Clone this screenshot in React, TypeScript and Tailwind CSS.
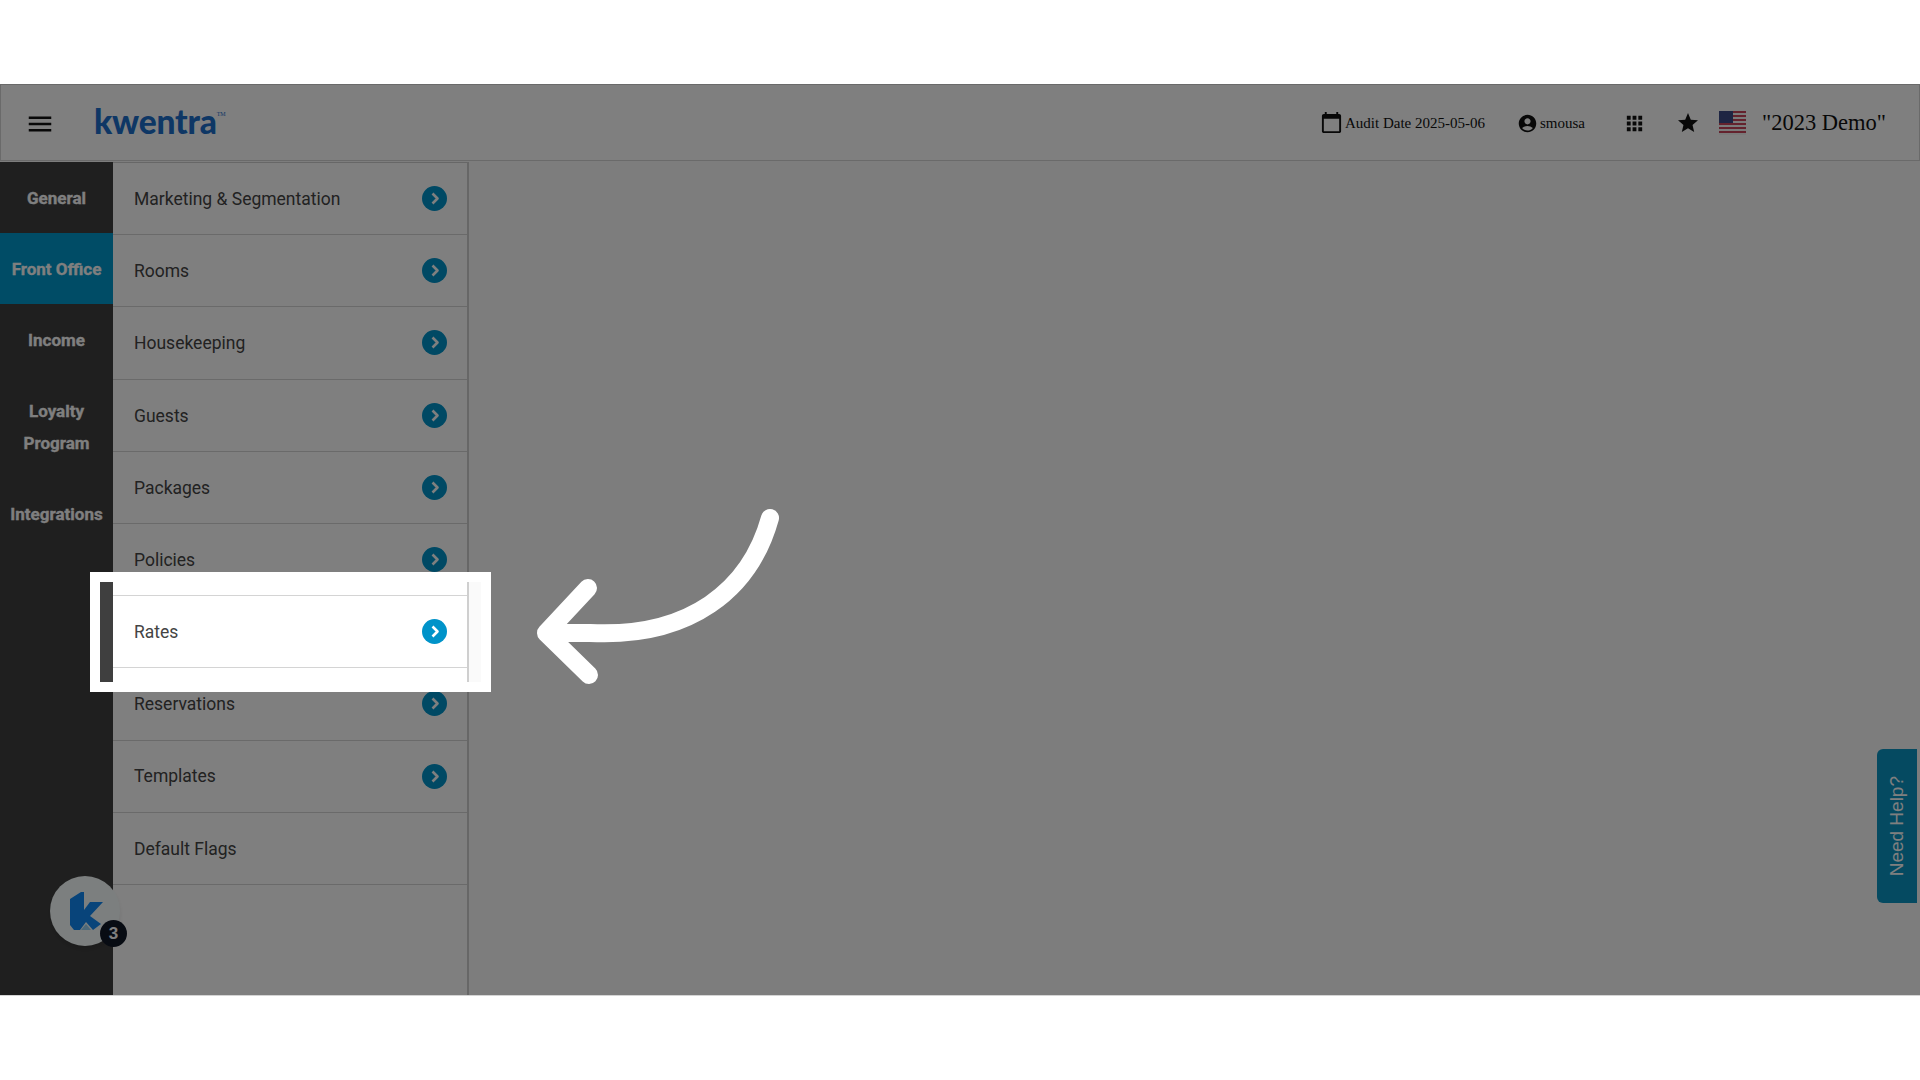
import { MdAccountCircle, MdApps, MdCalendarToday, MdMenu, MdStar } from "react-icons/md"

const sections = [
	{ label: "General" },
	{ label: "Front Office", active: true },
	{ label: "Income" },
	{ label: "Loyalty Program", tall: true },
	{ label: "Integrations" },
]

const menuItems = [
	"Marketing & Segmentation",
	"Rooms",
	"Housekeeping",
	"Guests",
	"Packages",
	"Policies",
	"Rates",
	"Reservations",
	"Templates",
	"Default Flags",
]

const UsFlag = () => (
	<svg width="27" height="24" viewBox="0 0 27 24" className="shrink-0">
		<rect width="27" height="24" fill="#f5f5f5" />
		{[0, 4, 8, 12, 16, 20].map((y) => (
			<rect key={y} y={y} width="27" height="2" fill="#c8455a" />
		))}
		<rect width="14" height="12" fill="#3d4a86" />
	</svg>
)

const ArrowCircle = () => (
	<span className="flex h-[25px] w-[25px] shrink-0 items-center justify-center rounded-full bg-[#0093c9]">
		<svg width="13" height="13" viewBox="0 0 13 13" fill="none">
			<path d="M4.5 1.5 L9.5 6.5 L4.5 11.5" stroke="#fff" strokeWidth="2.6" strokeLinejoin="round" />
		</svg>
	</span>
)

const App = () => {
	return (
		<div className="flex min-h-[1080px] flex-col bg-white font-['Roboto',sans-serif]">
			<div className="h-[84px]" />
			<main className="relative flex h-[912px] flex-col overflow-hidden border-b border-[#d4d4d4] bg-[#fafafa]">
				<header className="flex h-[77px] shrink-0 items-center border border-[#d4d4d4] bg-white font-['Liberation_Serif',serif] text-[#111]">
					<MdMenu className="ml-[24px] mt-[2px] text-[30px]" />
					<span className="relative ml-[39px] -mt-[2px] font-['Lato',sans-serif] text-[33.5px] font-black leading-none tracking-[-0.2px] text-[#1c6ecb]">
						kwentra
					</span>
					<span className="mb-[16px] text-[6px] text-[#1c6ecb]">TM</span>
					<div className="ml-auto flex items-center">
						<MdCalendarToday className="text-[23px]" />
						<span className="ml-[2px] mt-[1px] text-[15px]">Audit Date 2025-05-06</span>
						<MdAccountCircle className="ml-[32px] mt-[1px] text-[21px]" />
						<span className="ml-[2px] mt-[1px] text-[15px]">smousa</span>
						<MdApps className="ml-[38px] mt-[1px] text-[23px]" />
						<MdStar className="ml-[30px] mt-[1px] text-[24px]" />
						<span className="ml-[19px] mt-[1px]"><UsFlag /></span>
						<span className="ml-[16px] mr-[33px] mt-[1px] text-[22.5px]">"2023 Demo"</span>
					</div>
				</header>

				<div className="mt-px flex min-h-0 flex-1">
					<nav className="w-[113px] shrink-0 bg-[#3f3f3f] text-center text-[17px] font-bold leading-[32px] text-white [-webkit-text-stroke:0.3px_#fff]">
						{sections.map((section) => (
							<div
								key={section.label}
								className={`flex items-center justify-center px-1 ${section.tall ? "h-[103px]" : "h-[71px]"} ${section.active ? "bg-[#0099cc]" : ""}`}
							>
								{section.label}
							</div>
						))}
					</nav>
					<div className="w-[356px] shrink-0 border-r-2 border-t border-[#cfcfcf] bg-white">
						{menuItems.map((item) => (
							<div
								key={item}
								className="flex h-[72.2px] items-center justify-between border-b border-[#d4d4d4] pl-[21px] pr-[20px] text-[17.5px] text-[#444]"
							>
								<span className="mt-px">{item}</span>
								{item !== "Default Flags" && <ArrowCircle />}
							</div>
						))}
					</div>
				</div>

				<button className="absolute bottom-[92px] right-[3px] flex h-[154px] w-[40px] items-center justify-center rounded-l-md bg-[#0b94c2] font-['Liberation_Sans',sans-serif] text-[19px] text-white">
					<span className="rotate-180 [writing-mode:vertical-rl]">Need Help?</span>
				</button>

				<div className="absolute left-[50px] top-[792px] flex h-[70px] w-[70px] items-center justify-center rounded-full bg-[#f8ffff] shadow-md">
					<svg width="34" height="38" viewBox="0 0 34 38" className="ml-[2px]">
						<path d="M1 7 L12 0 L15 0 V18 L21 10 H34 L21 24 L32 32 L24 38 L17 30 L11 38 H5 L1 33 Z" fill="#1088f5" />
						<path d="M12 38 L17 32 L22 38 Z" fill="#9ad2f5" />
					</svg>
					<span className="absolute -bottom-px -right-[7px] flex h-[27px] w-[27px] items-center justify-center rounded-full bg-[#111827] font-['Liberation_Sans',sans-serif] text-[17px] font-bold text-white">
						3
					</span>
				</div>

				<div className="absolute left-[90px] top-[488px] h-[120px] w-[401px] border-[10px] border-white shadow-[0_0_0_3000px_rgba(0,0,0,0.5)]" />

				<svg className="absolute left-[530px] top-[420px]" width="260" height="190" viewBox="530 504 260 190" fill="none">
					<path
						d="M770 518 C750 590 690 638 590 633 L546 633 M588 588 L546 633 L589 675"
						stroke="#fff"
						strokeWidth="18"
						strokeLinecap="round"
						strokeLinejoin="round"
					/>
				</svg>
			</main>
		</div>
	)
}

export default App
